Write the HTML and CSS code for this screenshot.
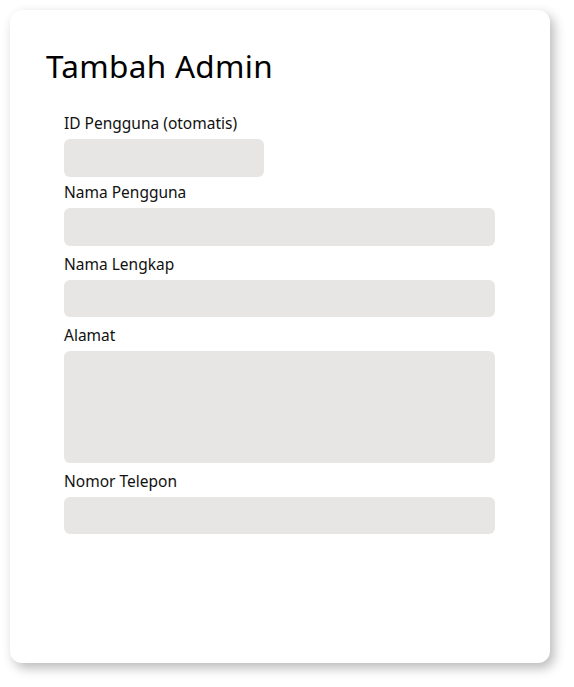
FILE: index.html
```html
<!DOCTYPE html>
<html lang="id">
<head>
<meta charset="utf-8">
<title>Tambah Admin</title>
<link rel="stylesheet" href="styles.css">
</head>
<body>
<div class="card">
  <h1 class="title">Tambah Admin</h1>
  <form class="form">
    <div class="field field--first">
      <label class="label" for="id">ID Pengguna (otomatis)</label>
      <input class="input input--short" id="id" type="text" readonly>
    </div>
    <div class="field">
      <label class="label" for="username">Nama Pengguna</label>
      <input class="input input--tall" id="username" type="text">
    </div>
    <div class="field">
      <label class="label" for="fullname">Nama Lengkap</label>
      <input class="input" id="fullname" type="text">
    </div>
    <div class="field">
      <label class="label" for="address">Alamat</label>
      <textarea class="input input--area" id="address"></textarea>
    </div>
    <div class="field">
      <label class="label" for="phone">Nomor Telepon</label>
      <input class="input" id="phone" type="text">
    </div>
  </form>
</div>
</body>
</html>
```
FILE: styles.css
```css
* { box-sizing: border-box; }
html, body { margin: 0; padding: 0; background: #ffffff; }
body {
  padding: 10px 24px 24px 10px;
  font-family: "Noto Sans", "DejaVu Sans", sans-serif;
  color: #000;
}
.card {
  width: 540px;
  height: 653px;
  background: #fff;
  border-radius: 12px;
  box-shadow: 4px 5px 12px rgba(0, 0, 0, 0.28);
  padding: 36px 36px 0 36px;
  display: flex;
  flex-direction: column;
}
.title {
  margin: 0;
  font-weight: 400;
  font-size: 31.5px;
  line-height: 40px;
  letter-spacing: 0.3px;
}
.form {
  margin: 27px 0 0 18px;
  display: flex;
  flex-direction: column;
}
.field {
  display: flex;
  flex-direction: column;
  margin-top: 8px;
}
.field--first { margin-top: 0; }
.field--first + .field { margin-top: 5px; }
.label {
  font-size: 15.5px;
  line-height: 20px;
  margin-bottom: 6px;
  color: #111;
}
.input {
  width: 431px;
  height: 37px;
  border: none;
  border-radius: 6px;
  background: #e7e6e4;
  font: inherit;
  padding: 0 10px;
  outline: none;
}
.input--short { width: 200px; height: 38px; }
.input--tall { height: 38px; }
.input--area { height: 112px; resize: none; display: block; }
```
